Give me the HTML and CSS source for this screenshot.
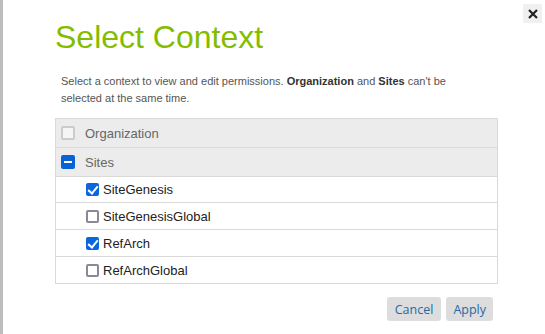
FILE: index.html
```html
<!DOCTYPE html>
<html>
<head>
  <title>Select Context</title>
  <link rel="stylesheet" href="styles.css">
</head>

<body>
  <div class="backdrop"></div>

  <div class="dialog">
    <button class="close" title="Close">
      <svg width="10" height="10" viewBox="0 0 10 10">
        <path d="M1 1 L9 9 M9 1 L1 9" stroke="#222" stroke-width="2.2" fill="none"/>
      </svg>
    </button>

    <h1>Select Context</h1>

    <p class="intro">
      Select a context to view and edit permissions. <b>Organization</b> and <b>Sites</b> can't be
      selected at the same time.
    </p>

    <div class="context-list">
      <div class="group-row">
        <span class="box box-empty"></span>
        <span class="group-label">Organization</span>
      </div>
      <div class="group-row">
        <span class="box box-partial"></span>
        <span class="group-label">Sites</span>
      </div>
      <div class="site-row first">
        <span class="check checked"></span>
        <span>SiteGenesis</span>
      </div>
      <div class="site-row">
        <span class="check"></span>
        <span>SiteGenesisGlobal</span>
      </div>
      <div class="site-row">
        <span class="check checked"></span>
        <span>RefArch</span>
      </div>
      <div class="site-row">
        <span class="check"></span>
        <span>RefArchGlobal</span>
      </div>
    </div>

    <div class="actions">
      <button class="cancel">Cancel</button>
      <button>Apply</button>
    </div>
  </div>
</body>
</html>
```

FILE: styles.css
```css
* {
  margin: 0;
  padding: 0;
  box-sizing: border-box;
}

body {
  display: flex;
  height: 334px;
  overflow: hidden;
  background: #fff;
  font-family: 'Liberation Sans', Arial, sans-serif;
}

.backdrop {
  width: 3px;
  background: #bdbdbd;
}

.dialog {
  position: relative;
  flex: 1;
  background: #fff;
  padding: 19px 47px 0 52px;
}

.close {
  position: absolute;
  top: 4px;
  right: 3px;
  width: 19px;
  height: 19px;
  border: none;
  background: #f0f0f0;
  display: flex;
  align-items: center;
  justify-content: center;
}

h1 {
  font-size: 32px;
  line-height: 36px;
  font-weight: normal;
  color: #84bd00;
}

.intro {
  max-width: 392px;
  margin: 18px 0 0 6px;
  font-size: 11px;
  line-height: 17px;
  color: #555;
}

.intro b {
  color: #333;
}

.context-list {
  margin-top: 11px;
  border: 1px solid #d9d9d9;
}

.group-row, .site-row {
  display: flex;
  align-items: center;
  border-bottom: 1px solid #d9d9d9;
  font-size: 13px;
}

.group-row {
  height: 29px;
  padding-left: 5px;
  background: #ececec;
  color: #666;
}

.site-row {
  height: 27px;
  padding-left: 30px;
  color: #222;
}

.site-row.first {
  height: 26px;
}

.site-row:last-child {
  border-bottom: none;
  height: 26px;
}

.group-label {
  margin-left: 10px;
}

.box {
  width: 14px;
  height: 14px;
  border-radius: 2px;
  position: relative;
}

.box-empty {
  border: 2px solid #cbcbcb;
  background: #f5f5f5;
}

.box-partial {
  background: #0a62d6;
}

.box-partial::after {
  content: "";
  position: absolute;
  left: 3px;
  top: 6px;
  width: 8px;
  height: 2px;
  background: #fff;
}

.check {
  width: 13px;
  height: 13px;
  margin-right: 4px;
  border: 2px solid #8a8a96;
  border-radius: 2px;
  position: relative;
}

.check.checked {
  border: none;
  background: #0b66dc;
}

.check.checked::after {
  content: "";
  position: absolute;
  left: 4px;
  top: 1px;
  width: 4px;
  height: 8px;
  border: solid #fff;
  border-width: 0 2px 2px 0;
  transform: rotate(40deg);
}

.actions {
  display: flex;
  justify-content: flex-end;
  gap: 5px;
  margin-top: 13px;
  padding-right: 5px;
}

.actions button {
  height: 24px;
  padding: 0 7px;
  border: none;
  border-radius: 3px;
  background: #dddddd;
  color: #1d6aa6;
  font-family: 'Open Sans', sans-serif;
  font-size: 12.5px;
}

.actions .cancel {
  padding: 0 8px;
}
```
